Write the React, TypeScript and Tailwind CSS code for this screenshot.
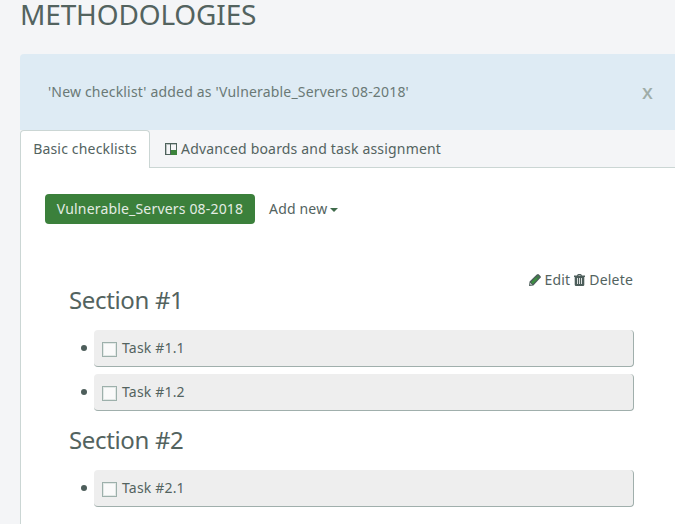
const sections = [
  { title: 'Section #1', tasks: ['Task #1.1', 'Task #1.2'] },
  { title: 'Section #2', tasks: ['Task #2.1'] },
];

function BoardIcon() {
  return (
    <svg className="mr-1 h-3 w-3 shrink-0" viewBox="0 0 12 12" shapeRendering="crispEdges">
      <path fill="#4d625b" fillRule="evenodd" d="M0 0h12v12H0zM1 1v10h4V1zM6 1v6h5V1z" />
      <path fill="#4d625b" opacity=".35" d="M1 1h10v1H1zM1 2h1v9H1z" />
      <path fill="#3b833b" d="M6 7h6v5H6z" />
    </svg>
  );
}

function PencilIcon() {
  return (
    <svg className="mr-1 h-3 w-3 shrink-0" viewBox="0 0 12 12">
      <path fill="#4d5e5b" d="M0 12l.6-4.4L7.5.7l.9-.5q.8-.4 1.5.2l1.7 1.8q.6.8 0 1.6l-.8.8L4.4 11.4z" />
      <path fill="#3b913f" d="M2 8.2L7.2 3 9 4.8 3.8 10zM8 2.2l.8-.7L10.5 3.2 9.7 4z" />
      <path fill="#fff" d="M1 10l1 1 .9-.3L1.3 9z" />
    </svg>
  );
}

function TrashIcon() {
  return (
    <svg className="mx-1 h-3 w-[11px] shrink-0" viewBox="0 0 11 12">
      <path
        fill="#4d5e5b"
        fillRule="evenodd"
        d="M3 1.5L3.5.5Q3.8 0 4.5 0h2q.5 0 .9.5L8 1.5h3V3h-.7v7.7q0 1.3-1.3 1.3H2Q.7 12 .7 10.7V3H0V1.5zM4.3 1.5h2.4L6.4 1H4.6zM3 4v6h.8V4zM5.1 4v6h.8V4zM7.2 4v6H8V4z"
      />
    </svg>
  );
}

export default function App() {
  return (
    <div className="h-[524px] w-[675px] overflow-hidden bg-[#f4f5f7] pl-5 font-['Noto_Sans','Open_Sans',sans-serif] text-sm leading-5 tracking-[0.18px] text-[#53635f]">
      <h1 className="-mt-1.5 h-[60px] text-[28px] leading-[40px] tracking-[-0.15px]">METHODOLOGIES</h1>
      <div className="flex h-[76px] items-center justify-between rounded-tl bg-[#deebf4] pr-[22px] pl-7 text-[#6a7976]">
        <span>'New checklist' added as 'Vulnerable_Servers 08-2018'</span>
        <button className="text-xl leading-5 font-medium text-[#9fada8]">x</button>
      </div>
      <nav className="flex h-[38px]">
        <a className="flex w-[130px] justify-center rounded-t border border-b-0 border-[#cbd6d4] bg-white pt-2">Basic checklists</a>
        <a className="flex flex-1 items-center border-b border-[#cbd6d4] pl-[15px]">
          <BoardIcon />
          Advanced boards and task assignment
        </a>
      </nav>
      <main className="h-[356px] border-l border-[#cbd6d4] bg-white pt-[26px] pl-6">
        <div className="flex items-center">
          <button className="h-[30px] w-[210px] rounded bg-[#3b803b] text-[#e4ece4]">Vulnerable_Servers 08-2018</button>
          <button className="ml-[14px] flex items-center">
            Add new
            <span className="mt-0.5 ml-[3px] border-x-4 border-t-4 border-x-transparent border-t-[#3f6b4b]" />
          </button>
        </div>
        <div className="mt-[46px] mr-[41px] ml-6">
          <div className="mr-px flex h-5 items-center justify-end">
            <PencilIcon />
            Edit
            <TrashIcon />
            Delete
          </div>
          {sections.map((section, index) => (
            <section key={section.title} className={index === 0 ? '-mt-5 pt-[10px]' : 'pt-[2px]'}>
              <h2 className="h-[50px] text-2xl leading-[40px] tracking-[-0.35px]">{section.title}</h2>
              <ul className="ml-[25px]">
                {section.tasks.map((task) => (
                  <li key={task} className="mb-[7px] flex h-[37px] items-center">
                    <span className="-mt-px -ml-[13px] mr-[7px] h-1.5 w-1.5 shrink-0 rounded-full bg-[#4d5e5b]" />
                    <label className="flex h-full flex-1 rounded border-r border-b border-[#a0afac] bg-[#eee] pt-2 pl-2">
                      <span className="mt-1 mr-[5px] h-[15px] w-[15px] border border-[#9db0ab] bg-[#fafafa] shadow-[inset_0_0_0_1px_#e2e8e6]" />
                      {task}
                    </label>
                  </li>
                ))}
              </ul>
            </section>
          ))}
        </div>
      </main>
    </div>
  );
}
